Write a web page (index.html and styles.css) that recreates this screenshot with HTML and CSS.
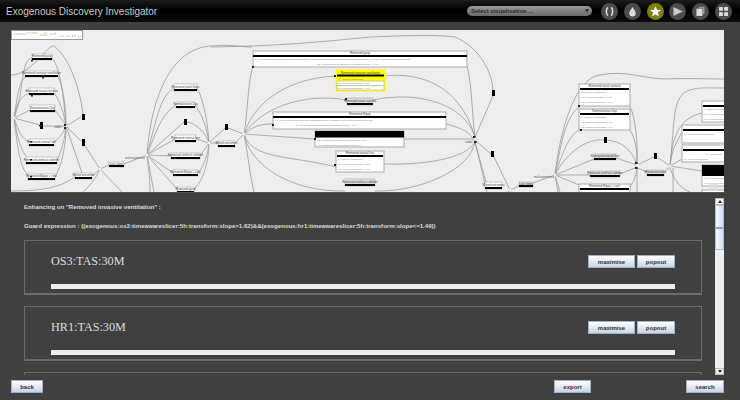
FILE: index.html
```html
<!DOCTYPE html>
<html lang="en">
<head>
    <meta charset="UTF-8">
    <title>Exogenous Discovery Investigator</title>
    <link rel="stylesheet" href="styles.css">
</head>
<body>

    <div id="top-bar">
        <h1>Exogenous Discovery Investigator</h1>
        <div class="vis-select">Select visualisation ...<span class="vis-arrow"></span></div>
        <div class="icon-row">
            <a class="round-icon"><svg viewBox="0 0 16 16"><path d="M6 3C3.500 5 3.500 11 6 13M10 3C12.500 5 12.500 11 10 13" fill="none" stroke="#ddd" stroke-width="2"/></svg></a>
            <a class="round-icon"><svg viewBox="0 0 16 16"><path d="M8 2.500C9 5 12 7.500 12 10A4 4 0 0 1 4 10C4 7.500 7 5 8 2.500Z" fill="#ddd"/></svg></a>
            <a class="round-icon active"><svg viewBox="0 0 16 16"><path d="M8 1.500L10 6H14.800L11 9.200L12.300 14L8 11.300L3.700 14L5 9.200L1.200 6H6Z" fill="#fff"/></svg></a>
            <a class="round-icon"><svg viewBox="0 0 16 16"><path d="M3 2.500L14.500 8L3 13.500Z" fill="#ccc"/></svg></a>
            <a class="round-icon"><svg viewBox="0 0 16 16"><path d="M6 2H13V11H11V4H6Z" fill="#999"/><rect x="3" y="4.500" width="7.500" height="9" fill="#ddd"/></svg></a>
            <a class="round-icon"><svg viewBox="0 0 16 16"><path d="M2.500 2.500H7.200V7.200H2.500ZM8.800 2.500H13.500V7.200H8.800ZM2.500 8.800H7.200V13.500H2.500ZM8.800 8.800H13.500V13.500H8.800Z" fill="#ddd"/></svg></a>
        </div>
    </div>

    <div id="graph-panel">
        <svg class="graph" viewBox="11 30 713 162">
            <!-- edges -->
            <g class="edges">
                <path d="M14 118C24 95 20 60 32 58M14 118C18 95 18 78 30 75M14 118C16 105 20 96 30 93M14 118L30 110M14 118L40 125M14 118C18 130 22 140 30 142M14 118C18 140 22 155 30 160M14 118C18 150 20 170 30 177"/>
                <path d="M52 58C62 70 64 105 66 125M58 76C64 90 66 110 66 125M54 93C60 100 64 115 66 125M55 110L66 125M43 126H66M54 142C60 138 64 132 66 125M57 160C62 150 65 138 66 125M55 177C62 165 66 145 66 126"/>
                <path d="M11 75C30 76 48 44 54 46C70 58 80 90 83 114M66 126L81 117M66 126L81 141M66 126L82 173M85 146L100 169"/>
                <path d="M11 191C40 191 60 188 75 177M92 176L100 169L109 165M83 192C90 186 96 178 100 169L122 192M124 164L147 155"/>
                <path d="M147 155C150 110 165 50 210 46C230 44 240 47 252 47M147 155C155 125 160 95 174 88M147 155C155 135 160 115 176 105M147 155L184 122M147 155L175 139M147 155L171 156M147 155L173 173M147 155L177 189M147 155C150 170 152 182 154 192M147 155C149 170 150 182 150 192"/>
                <path d="M197 88C204 100 208 125 209 143M195 105C203 115 207 130 209 143M187 122C198 124 206 134 209 143M196 139L209 143M200 156L209 143M198 173C205 165 208 152 209 143M194 189C204 180 209 160 209 143M209 143L225 128M209 143H218M235 143L244 134L228 128"/>
                <path d="M244 134C248 110 248 80 253 67M244 134C255 100 290 78 336 76M244 134C260 110 300 92 347 100M244 134C255 125 262 124 273 124M244 134L315 139M244 134C252 160 290 155 336 167M244 134C250 165 290 192 345 191M244 134C248 155 250 175 254 192"/>
                <path d="M370 37C400 36 430 34 455 37C480 48 492 72 493 90M211 47C280 46 320 42 370 37"/>
                <path d="M467 66C472 85 472 115 475 137M385 76C420 72 460 85 475 137M373 100C420 90 465 105 475 137M446 124C462 128 470 132 475 142M404 139H475M384 164C420 165 465 160 475 142M375 191C420 192 470 170 475 142M475 137L493 96M475 140L491 154M475 142L486 182M475 142L487 192M494 157L510 190M510 190L519 186M510 190L508 192M533 183L555 175"/>
                <path d="M555 175C560 130 575 78 600 75C625 70 640 78 665 79C690 78 705 79 724 79M555 175C562 140 565 118 580 106M555 175C562 155 568 135 580 130M555 175C565 155 585 138 604 140M555 175L594 159M555 175H590M555 175L579 185M558 192L555 175M560 192L556 178"/>
                <path d="M630 106C636 120 638 145 637 165M630 130C636 140 637 150 637 165M606 140C622 141 632 150 637 165M616 158L637 165M620 174L637 167M637 167C636 178 632 186 625 192M637 165L654 157L657 157L670 166M637 168L647 172M664 172L670 167M637 170V192"/>
                <path d="M670 166C675 120 672 95 690 90C700 87 710 88 724 88M670 166C672 135 680 118 702 113M670 166C672 150 675 145 682 132M670 166L682 159M670 166L702 171M670 168C674 180 680 188 690 192M673 168V192"/>
            </g>

            <!-- nodes, left branch -->
            <g class="node"><rect x="32" y="54" width="20" height="6"/><rect class="bar" x="32" y="58" width="20" height="2"/><text x="42" y="57">Removed gasp</text></g>
            <g class="node"><rect x="25" y="71" width="33" height="6"/><rect class="bar" x="25" y="75" width="33" height="2"/><text x="41.500" y="74">Removed invasive ventilation</text></g>
            <g class="node"><rect x="29" y="88" width="25" height="7"/><rect class="bar" x="29" y="93" width="25" height="2"/><text x="41.500" y="91.500">Removed nasal cannula</text></g>
            <g class="node"><rect x="30" y="105" width="25" height="7"/><rect class="bar" x="30" y="110" width="25" height="2"/><text x="42.500" y="108.500">Normalization Day</text></g>
            <rect class="blob" x="40" y="122" width="3" height="7"/>
            <g class="node"><rect x="29" y="139" width="25" height="7"/><rect class="bar" x="29" y="144" width="25" height="2"/><text x="41.500" y="142.500">Removed arterial line</text></g>
            <g class="node"><rect x="26" y="157" width="31" height="7"/><rect class="bar" x="26" y="162" width="31" height="2"/><text x="41.500" y="160.500">Removed urethral catheter</text></g>
            <g class="node"><rect x="28" y="174" width="27" height="6"/><rect class="bar" x="28" y="178" width="27" height="2"/><text x="41.500" y="177">Removed Bipap + cool</text></g>
            <rect class="blob" x="82" y="114" width="3" height="6"/>
            <rect class="blob" x="82" y="139" width="3" height="7"/>
            <g class="node"><rect x="75" y="173" width="17" height="6"/><rect class="bar" x="75" y="177" width="17" height="2"/><text x="83.500" y="176">Mixed outcomes</text></g>
            <g class="node"><rect x="109" y="162" width="15" height="5"/><rect class="bar" x="109" y="165" width="15" height="2"/><text x="116.500" y="164.500">Last steps</text></g>

            <!-- nodes, second branch -->
            <g class="node"><rect x="174" y="84" width="23" height="7"/><rect class="bar" x="174" y="89" width="23" height="2"/><text x="185.500" y="87.500">Removed peak flows</text></g>
            <g class="node"><rect x="176" y="102" width="19" height="6"/><rect class="bar" x="176" y="106" width="19" height="2"/><text x="185.500" y="105">Normalization Day</text></g>
            <rect class="blob" x="184" y="119" width="3" height="6"/>
            <g class="node"><rect x="175" y="135" width="21" height="7"/><rect class="bar" x="175" y="140" width="21" height="2"/><text x="185.500" y="138.500">Removed arterial line</text></g>
            <g class="node"><rect x="171" y="153" width="29" height="6"/><rect class="bar" x="171" y="157" width="29" height="2"/><text x="185.500" y="156">Removed urethral catheter</text></g>
            <g class="node"><rect x="173" y="170" width="25" height="6"/><rect class="bar" x="173" y="174" width="25" height="2"/><text x="185.500" y="173">Removed Bipap + cool</text></g>
            <g class="node"><rect x="177" y="187" width="17" height="6"/><rect class="bar" x="177" y="191" width="17" height="2"/><text x="185.500" y="190">Removed gasp</text></g>
            <rect class="blob" x="225" y="124" width="3" height="6"/>
            <g class="node"><rect x="218" y="141" width="17" height="6"/><rect class="bar" x="218" y="145" width="17" height="2"/><text x="226.500" y="144">Mixed outcomes</text></g>

            <!-- wide nodes, middle -->
            <g class="node big"><rect x="253" y="51" width="214" height="16"/><rect class="bar" x="253" y="55" width="214" height="2"/><text x="360" y="54">Removed gasp</text><text class="rule" x="255" y="60"><tspan class="red">0.4</tspan> (exogenous:os3:timeawareslicer:5h:transform:slope&gt;1.62)&amp;&amp;(exogenous:hr1:timeawareslicer:5h:transform:slope&lt;=1.49)&amp;&amp;(exogenous:rr:timeawareslicer:5h)</text><text class="rule" x="317" y="64.500"><tspan class="red">0.5</tspan> (exogenous:hr1:timeawareslicer:5h:transform:slope&lt;=1.49)</text></g>
            <g class="node selected"><rect x="336" y="70" width="49" height="21"/><rect class="bar" x="337" y="74.500" width="47" height="2"/><text x="360.500" y="73.500">Removed invasive ventilation</text><rect class="row" x="337" y="81" width="47" height="4.500"/><text class="rule" x="338" y="79.500"><tspan class="red">0.4</tspan> Majority following slice</text><text class="rule" x="338" y="84"><tspan class="red">0.3</tspan> (exogenous:os3:slope&gt;1.62)</text><rect class="row" x="337" y="85.500" width="47" height="4.500"/><text class="rule" x="338" y="88.500"><tspan class="red">0.3</tspan> (exogenous:hr1:slope&lt;=1.49)</text></g>
            <g class="node grey"><rect x="347" y="98" width="26" height="7"/><rect class="bar" x="347" y="103" width="26" height="2"/><text x="360" y="101.500">Removed nasal cannula</text></g>
            <g class="node big"><rect x="273" y="112" width="173" height="17"/><rect class="bar" x="273" y="116" width="173" height="2"/><text x="360" y="115">Removed Bipap</text><text class="rule" x="275" y="121"><tspan class="red">0.4</tspan> (exogenous:os3:timeawareslicer:5h:transform:slope&gt;1.62)&amp;&amp;(exogenous:hr1:timeawareslicer:5h)</text><text class="rule" x="296" y="126"><tspan class="red">0.6</tspan> (exogenous:hr1:timeawareslicer:5h:transform:slope&lt;=1.49)</text></g>
            <g class="node big"><rect x="315" y="131" width="89" height="16"/><rect class="bar" x="315" y="131" width="89" height="6.500"/><text class="rule" x="317" y="140.500"><tspan class="red">0.2</tspan> (exogenous:os3:timeawareslicer:5h:slope&gt;1.62)</text><text class="rule" x="317" y="145.500"><tspan class="red">0.8</tspan> (exogenous:hr1:timeawareslicer:5h:slope)</text></g>
            <g class="node big"><rect x="336" y="151" width="48" height="21"/><rect class="bar" x="337" y="155" width="46" height="2"/><text x="360" y="154">Removed arterial line</text><text class="rule" x="338" y="160"><tspan class="red">0.4</tspan> Majority following slice</text><text class="rule" x="338" y="165"><tspan class="red">0.3</tspan> (exogenous:os3:slope&gt;1.62)</text><text class="rule" x="338" y="170"><tspan class="red">0.3</tspan> (exogenous:hr1:slope&lt;=1.49)</text></g>
            <g class="node grey"><rect x="345" y="179" width="30" height="7"/><rect class="bar" x="345" y="184" width="30" height="2"/><text x="360" y="182.500">Removed urethral catheter</text></g>
            <rect class="blob" x="492" y="90" width="3" height="6"/>
            <rect class="blob" x="491" y="151" width="3" height="6"/>
            <g class="node"><rect x="485" y="182" width="17" height="7"/><rect class="bar" x="485" y="187" width="17" height="2"/><text x="493.500" y="185.500">Mixed outcomes</text></g>
            <g class="node grey"><rect x="519" y="182" width="14" height="5"/><rect class="bar" x="519" y="185" width="14" height="2"/><text x="526" y="184.500">Last steps</text></g>

            <!-- nodes, right branch -->
            <g class="node big"><rect x="579" y="84" width="51" height="22"/><rect class="bar" x="580" y="88" width="49" height="2"/><text x="604.500" y="87">Removed nasal cannula</text><text class="rule" x="581" y="93"><tspan class="red">0.4</tspan> Majority following slice</text><text class="rule" x="581" y="98"><tspan class="red">0.3</tspan> (exogenous:os3:slope&gt;1.62)</text><text class="rule" x="581" y="103"><tspan class="red">0.3</tspan> (exogenous:hr1:slope&lt;=1.49)</text></g>
            <g class="node big"><rect x="579" y="109" width="51" height="21"/><rect class="bar" x="580" y="113" width="49" height="2"/><text x="604.500" y="112">Normalization Day</text><text class="rule" x="581" y="117.500"><tspan class="red">0.4</tspan> Majority following slice</text><text class="rule" x="581" y="122.500"><tspan class="red">0.3</tspan> (exogenous:os3:slope&gt;1.62)</text><text class="rule" x="581" y="127.500"><tspan class="red">0.3</tspan> (exogenous:hr1:slope&lt;=1.49)</text></g>
            <rect class="blob" x="604" y="137" width="3" height="6"/>
            <g class="node grey"><rect x="594" y="154" width="22" height="6"/><rect class="bar" x="594" y="158" width="22" height="2"/><text x="605" y="157">Removed arterial line</text></g>
            <g class="node grey"><rect x="590" y="171" width="30" height="6"/><rect class="bar" x="590" y="175" width="30" height="2"/><text x="605" y="174">Removed urethral catheter</text></g>
            <g class="node big"><rect x="579" y="184" width="51" height="12"/><rect class="bar" x="580" y="188" width="49" height="2"/><text x="604.500" y="187">Removed Bipap + cool</text></g>
            <rect class="blob" x="654" y="153" width="3" height="6"/>
            <g class="node grey"><rect x="647" y="170" width="17" height="6"/><rect class="bar" x="647" y="174" width="17" height="2"/><text x="655.500" y="173">Mixed outcomes</text></g>

            <!-- nodes cut off by the right edge -->
            <g class="node big"><rect x="702" y="101" width="30" height="21"/><rect class="bar" x="703" y="105" width="28" height="2"/><text class="rule" x="704" y="110"><tspan class="red">0.4</tspan> Majority following</text><text class="rule" x="704" y="115"><tspan class="red">0.3</tspan> (exogenous:os3)</text><text class="rule" x="704" y="120"><tspan class="red">0.3</tspan> (exogenous:hr1)</text></g>
            <g class="node big"><rect x="682" y="125" width="50" height="18"/><rect class="bar" x="683" y="129" width="48" height="2"/><text class="rule" x="684" y="135"><tspan class="red">0.4</tspan> (exogenous:os3:timeaware)</text></g>
            <g class="node big"><rect x="682" y="145" width="50" height="17"/><rect class="bar" x="683" y="149" width="48" height="2"/><text class="rule" x="706" y="154.500"><tspan class="red">0.6</tspan> (exogenous)</text><text class="rule" x="684" y="159.500"><tspan class="red">0.4</tspan> (exogenous:hr1:time)</text></g>
            <g class="node big"><rect x="702" y="165" width="30" height="21"/><rect class="bar" x="702" y="165" width="30" height="11"/><text class="rule" x="704" y="179"><tspan class="red">0.2</tspan> (exogenous:os3)</text><text class="rule" x="704" y="184"><tspan class="red">0.8</tspan> (exogenous:hr1)</text></g>
            <g class="node big"><rect x="702" y="190" width="30" height="6"/></g>

            <!-- hubs and arrow heads -->
            <g class="hubs">
                <circle cx="14" cy="118" r="1.500"/><circle cx="66" cy="126" r="1.500"/><circle cx="100" cy="169" r="1.500"/><circle cx="147" cy="155" r="1.500"/><circle cx="209" cy="143" r="1.500"/><circle cx="244" cy="134" r="1.500"/><circle cx="475" cy="139" r="1.500"/><circle cx="510" cy="190" r="1.500"/><circle cx="555" cy="175" r="1.500"/><circle cx="637" cy="165" r="1.500"/><circle cx="670" cy="166" r="1.500"/>
            </g>
            <g class="heads">
                <rect x="31" y="60" width="2" height="1.500"/><rect x="42" y="77" width="2" height="1.500"/><rect x="31" y="95" width="2" height="1.500"/><rect x="30" y="110" width="2" height="1.500"/><rect x="39" y="125" width="2" height="1.500"/><rect x="30" y="141" width="2" height="1.500"/><rect x="30" y="159" width="2" height="1.500"/><rect x="30" y="176" width="2" height="1.500"/><rect x="64" y="124" width="2" height="2"/><rect x="64" y="127" width="2" height="2"/><rect x="473" y="136" width="2.500" height="2"/><rect x="474" y="141" width="2.500" height="2"/><rect x="334" y="75" width="2" height="2"/><rect x="345" y="98" width="2" height="2"/><rect x="272" y="124" width="2" height="2"/><rect x="314" y="138" width="2" height="2"/><rect x="334" y="164" width="2" height="2"/><rect x="252" y="66" width="2" height="2"/><rect x="578" y="105" width="2" height="2"/><rect x="580" y="129" width="2" height="2"/><rect x="635" y="162" width="2.500" height="2"/><rect x="635" y="167" width="2.500" height="2"/>
            </g>

            <text class="hub-label" x="54" y="128">stable</text>
            <text class="hub-label" x="125" y="159">multisegmented</text>
            <text class="hub-label" x="465" y="143">stable</text>
            <text class="hub-label" x="534" y="178">multisegmented</text>

            <!-- overview box in the corner -->
            <rect class="overview" x="11.500" y="30.500" width="71" height="9"/>
            <path class="overview-marks" d="M14 34H26M27 33H38M40 35H48M50 34H56M60 36H64M66 36H70M72 36H76M78 37H81"/>
            <path class="overview-yellow" d="M44 33H47M54 33H56"/>
            <rect class="scroll-mark" x="708" y="183" width="10" height="8"/>
        </svg>
    </div>

    <div id="detail-row">
        <div id="detail-list">
            <p class="note">Enhancing on "Removed invasive ventilation" :</p>
            <p class="note guard">Guard expression : ((exogenous:os3:timeawareslicer:5h:transform:slope&gt;1.62)&amp;&amp;(exogenous:hr1:timeawareslicer:5h:transform:slope&lt;=1.49))</p>

            <div class="chart-card">
                <div class="chart-head">
                    <h2>OS3:TAS:30M</h2>
                    <button class="btn">maximise</button>
                    <button class="btn">popout</button>
                </div>
                <div class="chart-bar"></div>
            </div>
            <div class="chart-card">
                <div class="chart-head">
                    <h2>HR1:TAS:30M</h2>
                    <button class="btn">maximise</button>
                    <button class="btn">popout</button>
                </div>
                <div class="chart-bar"></div>
            </div>
            <div class="chart-card cut-card"></div>
        </div>
        <div class="scrollbar">
            <div class="scroll-btn"><span class="tri-up"></span></div>
            <div class="scroll-track"><div class="scroll-thumb"></div></div>
            <div class="scroll-btn"><span class="tri-down"></span></div>
        </div>
    </div>

    <div id="bottom-bar">
        <button class="btn back-btn">back</button>
        <button class="btn export-btn">export</button>
        <button class="btn search-btn">search</button>
    </div>

</body>
</html>
```

FILE: styles.css
```css
html, body {
    margin: 0;
    height: 100%;
    overflow: hidden;
}
body {
    background-color: #404040;
    color: #ddd;
    font-family: 'Liberation Sans', Arial, sans-serif;
}
#top-bar {
    display: flex;
    align-items: center;
    height: 22px;
    padding: 0 8px 0 6px;
    background: linear-gradient(to bottom, #1c1c1c 0%, #000 45%, #0c0c0c 100%);
}
#top-bar>h1 {
    flex: 1;
    margin: 0;
    font-size: 10px;
    font-weight: normal;
    color: #ccc;
}
.vis-select {
    position: relative;
    width: 125px;
    height: 10px;
    margin-right: 9px;
    padding-left: 4px;
    box-sizing: border-box;
    border-radius: 5px;
    background: linear-gradient(to bottom, #999 0%, #6a6a6a 100%);
    color: #2a2a2a;
    font-size: 6px;
    font-weight: bold;
    line-height: 10px;
}
.vis-arrow {
    position: absolute;
    right: 3px;
    top: 3px;
    border-left: 2.500px solid transparent;
    border-right: 2.500px solid transparent;
    border-top: 4px solid #333;
}
.icon-row {
    display: flex;
    gap: 5.800px;
}
.round-icon {
    display: block;
    width: 17px;
    height: 17px;
    border-radius: 50%;
    background-color: #4c4c4c;
}
.round-icon.active {
    background-color: #7f7f10;
}
.round-icon>svg {
    display: block;
    width: 13px;
    height: 13px;
    margin: 2px;
}
#graph-panel {
    height: 162px;
    margin: 8px 16px 0 11px;
    border-bottom: 1px solid #555;
    background-color: #eee;
}
.graph {
    display: block;
    width: 713px;
    height: 162px;
}
.edges>path {
    fill: none;
    stroke: #999;
    stroke-width: .8;
}
.node>rect {
    fill: #fff;
    stroke: #aaa;
    stroke-width: .6;
}
.node>rect.bar {
    fill: #000;
    stroke: none;
}
.node.big>rect:first-child {
    stroke: #aaa;
    stroke-width: 1;
}
.node.grey>rect:first-child {
    fill: #ddd;
}
.node.selected>rect:first-child {
    fill: #ffff00;
    stroke: #ffff00;
    stroke-width: 1;
}
.node>text {
    font-family: 'Liberation Sans', sans-serif;
    font-size: 3px;
    fill: #444;
    text-anchor: middle;
}
.node>text.rule {
    font-size: 2.200px;
    fill: #777;
    text-anchor: start;
}
.node>text .red {
    fill: #f44;
}
.blob {
    fill: #000;
}
.hubs>circle {
    fill: #fff;
    stroke: #bbb;
    stroke-width: .4;
}
.heads>rect {
    fill: #222;
}
.hub-label {
    font-family: 'Liberation Sans', sans-serif;
    font-size: 2.800px;
    fill: #555;
}
.overview {
    fill: #fff;
    stroke: #999;
}
.overview-marks {
    fill: none;
    stroke: #aaa;
    stroke-width: 1;
    stroke-dasharray: 1 .6;
}
.overview-yellow {
    fill: none;
    stroke: #e6e060;
    stroke-width: 1;
}
.scroll-mark {
    fill: #ddd;
    opacity: .7;
}
#detail-row {
    display: flex;
    height: 177px;
    margin: 5px 16px 0 24px;
}
#detail-list {
    flex: 1;
    min-width: 0;
    margin-right: 13px;
    overflow: hidden;
}
.note {
    margin: 4px 0 0 0;
    font-size: 6.100px;
    font-weight: bold;
    line-height: 10px;
    color: #ddd;
}
.note.guard {
    margin: 9px 0 9px 0;
}
.chart-card {
    height: 55px;
    box-sizing: border-box;
    margin-bottom: 11px;
    padding: 0 26px;
    border: 1px solid #6c6c6c;
    border-bottom-width: 2px;
}
.chart-head {
    display: flex;
    align-items: center;
    gap: 2px;
    height: 13px;
    margin-top: 14px;
}
.chart-head>h2 {
    flex: 1;
    margin: 0;
    font-family: 'Liberation Serif', 'Times New Roman', serif;
    font-size: 12.200px;
    font-weight: normal;
    color: #ddd;
}
.chart-bar {
    height: 5px;
    margin-top: 16px;
    background-color: #eee;
}
.btn {
    height: 13px;
    padding: 0;
    border: 1px solid #9fb2c9;
    background: linear-gradient(to bottom, #fff 0%, #dde6f2 60%, #c6d4e6 100%);
    color: #333;
    font-family: 'Liberation Sans', Arial, sans-serif;
    font-size: 6px;
    font-weight: bold;
}
.chart-head>.btn:nth-child(2) {
    width: 47px;
}
.chart-head>.btn:nth-child(3) {
    width: 38px;
}
.scrollbar {
    display: flex;
    flex-direction: column;
    width: 9px;
    background-color: #eee;
}
.scroll-btn {
    display: flex;
    align-items: center;
    justify-content: center;
    height: 7px;
    background-color: #f4f6fa;
    border: 1px solid #bbb;
    box-sizing: border-box;
}
.tri-up {
    border-left: 2px solid transparent;
    border-right: 2px solid transparent;
    border-bottom: 3px solid #222;
}
.tri-down {
    border-left: 2px solid transparent;
    border-right: 2px solid transparent;
    border-top: 3px solid #222;
}
.scroll-track {
    flex: 1;
}
.scroll-thumb {
    height: 45px;
    background:
        linear-gradient(to bottom, transparent 48%, #8fa8cc 48%, #8fa8cc 54%, transparent 54%),
        linear-gradient(to right, #fff 0%, #cfdcf0 100%);
    border: 1px solid #a9bedb;
    box-sizing: border-box;
}
#bottom-bar {
    display: flex;
    justify-content: space-between;
    margin: 5px 16px 0 11px;
}
.back-btn {
    width: 32px;
}
.export-btn {
    width: 37px;
    margin-left: 511px;
}
.search-btn {
    width: 38px;
    margin-left: auto;
}
```
